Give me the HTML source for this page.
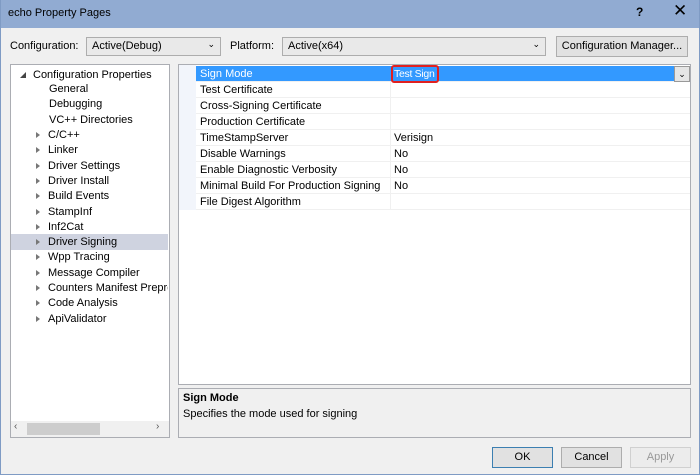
<!DOCTYPE html>
<html><head><style>
*{margin:0;padding:0;box-sizing:border-box}
body{width:700px;height:475px;overflow:hidden;background:#f0f0f0;font-family:"Liberation Sans",sans-serif;font-size:11px;color:#000;position:relative}
.a{position:absolute}
.win{left:0;top:0;width:700px;height:475px;border:1px solid #7f9bc4;border-top:none}
.title{left:0;top:0;width:700px;height:28px;background:#91abd2}
.combo{background:#e9e9e9;border:1px solid #adadad;height:19px;padding:2px 5px}
.btn{background:#e1e1e1;border:1px solid #adadad;height:21px;text-align:center;line-height:19px}
.row{position:absolute;left:196px;width:494px;height:16px;border-bottom:1px solid #f0f0f0}
.row span{position:absolute;top:2px;white-space:nowrap}
.tr{position:absolute;left:0;width:157px;height:15px;line-height:16px}
.tri{position:absolute;left:25px;top:5px;width:0;height:0;border-left:4px solid #777;border-top:3.5px solid transparent;border-bottom:3.5px solid transparent}
</style></head><body>
<div class="a title"></div>
<div class="a" style="left:8px;top:7px;font-size:11px">echo Property Pages</div>
<div class="a" style="left:636px;top:5px;font-weight:bold;font-size:12px">?</div>
<div class="a" style="left:673px;top:1px;font-size:17px">✕</div>
<div class="a win"></div>
<div class="a" style="left:10px;top:40px">Configuration:</div>
<div class="a combo" style="left:86px;top:37px;width:135px">Active(Debug)<span style="position:absolute;right:5px;top:1px;font-size:9px">⌄</span></div>
<div class="a" style="left:230px;top:40px">Platform:</div>
<div class="a combo" style="left:282px;top:37px;width:264px">Active(x64)<span style="position:absolute;right:5px;top:1px;font-size:9px">⌄</span></div>
<div class="a btn" style="left:556px;top:36px;width:132px">Configuration Manager...</div>

<div class="a" style="left:10px;top:64px;width:160px;height:374px;background:#fff;border:1px solid #abadb3">
<div class="tr" style="top:2px"><span style="position:absolute;left:9px;top:5px;width:0;height:0;border-right:6px solid #444;border-top:6px solid transparent"></span><span style="position:absolute;left:22px">Configuration Properties</span></div>
<div style="position:absolute;left:38px;top:17px;line-height:15.3px">General<br>Debugging<br>VC++ Directories</div>
</div>
<div class="a" style="left:11px;top:127px;width:158px;height:260px">
<div class="tr" style="top:0"><i class="tri"></i><span style="position:absolute;left:37px">C/C++</span></div>
<div class="tr" style="top:15.3px"><i class="tri"></i><span style="position:absolute;left:37px">Linker</span></div>
<div class="tr" style="top:30.6px"><i class="tri"></i><span style="position:absolute;left:37px">Driver Settings</span></div>
<div class="tr" style="top:45.9px"><i class="tri"></i><span style="position:absolute;left:37px">Driver Install</span></div>
<div class="tr" style="top:61.2px"><i class="tri"></i><span style="position:absolute;left:37px">Build Events</span></div>
<div class="tr" style="top:76.5px"><i class="tri"></i><span style="position:absolute;left:37px">StampInf</span></div>
<div class="tr" style="top:91.8px"><i class="tri"></i><span style="position:absolute;left:37px">Inf2Cat</span></div>
<div class="tr" style="top:107.1px;background:#cfd3e0;height:16px"><i class="tri"></i><span style="position:absolute;left:37px">Driver Signing</span></div>
<div class="tr" style="top:122.4px"><i class="tri"></i><span style="position:absolute;left:37px">Wpp Tracing</span></div>
<div class="tr" style="top:137.7px"><i class="tri"></i><span style="position:absolute;left:37px">Message Compiler</span></div>
<div class="tr" style="top:153px"><i class="tri"></i><span style="position:absolute;left:37px;white-space:nowrap;overflow:hidden;width:120px">Counters Manifest Preprocessor</span></div>
<div class="tr" style="top:168.3px"><i class="tri"></i><span style="position:absolute;left:37px">Code Analysis</span></div>
<div class="tr" style="top:183.6px"><i class="tri"></i><span style="position:absolute;left:37px">ApiValidator</span></div>
</div>
<div class="a" style="left:11px;top:421px;width:158px;height:16px;background:#f0f0f0"></div>
<div class="a" style="left:27px;top:423px;width:73px;height:12px;background:#cdcdcd"></div>
<div class="a" style="left:14px;top:421px;font-size:10px;color:#555">‹</div>
<div class="a" style="left:156px;top:421px;font-size:10px;color:#555">›</div>

<div class="a" style="left:178px;top:64px;width:513px;height:321px;background:#fff;border:1px solid #abadb3">
<div style="position:absolute;left:0;top:0;width:17px;height:145px;background:#f2f5fb"></div>
</div>
<div class="row" style="top:66px;background:#3399ff;color:#fff;width:484px"><span style="left:4px">Sign Mode</span></div>
<div class="a" style="left:391px;top:65px;width:48px;height:18px;border:2px solid #e02020;border-radius:3px;color:#fff;padding-left:1px;line-height:14px;white-space:nowrap;overflow:hidden;font-size:10.5px;letter-spacing:-0.3px">Test Sign</div>
<div class="a" style="left:674px;top:66px;width:16px;height:16px;background:#e5e5e5;border:1px solid #999;font-size:9px;text-align:center;line-height:14px">⌄</div>
<div class="row" style="top:82px"><span style="left:4px">Test Certificate</span></div>
<div class="row" style="top:98px"><span style="left:4px">Cross-Signing Certificate</span></div>
<div class="row" style="top:114px"><span style="left:4px">Production Certificate</span></div>
<div class="row" style="top:130px"><span style="left:4px">TimeStampServer</span><span style="left:198px">Verisign</span></div>
<div class="row" style="top:146px"><span style="left:4px">Disable Warnings</span><span style="left:198px">No</span></div>
<div class="row" style="top:162px"><span style="left:4px">Enable Diagnostic Verbosity</span><span style="left:198px">No</span></div>
<div class="row" style="top:178px"><span style="left:4px">Minimal Build For Production Signing</span><span style="left:198px">No</span></div>
<div class="row" style="top:194px"><span style="left:4px">File Digest Algorithm</span></div>
<div class="a" style="left:390px;top:82px;width:1px;height:128px;background:#f0f0f0"></div>

<div class="a" style="left:178px;top:388px;width:513px;height:50px;border:1px solid #abadb3;background:#f0f0f0">
<div style="position:absolute;left:4px;top:3px;font-weight:bold">Sign Mode</div>
<div style="position:absolute;left:4px;top:19px">Specifies the mode used for signing</div>
</div>
<div class="a btn" style="left:492px;top:447px;width:61px;border-color:#3c7fb1">OK</div>
<div class="a btn" style="left:561px;top:447px;width:61px">Cancel</div>
<div class="a btn" style="left:630px;top:447px;width:61px;background:#ececec;border-color:#d0d0d0;color:#999">Apply</div>
</body></html>
